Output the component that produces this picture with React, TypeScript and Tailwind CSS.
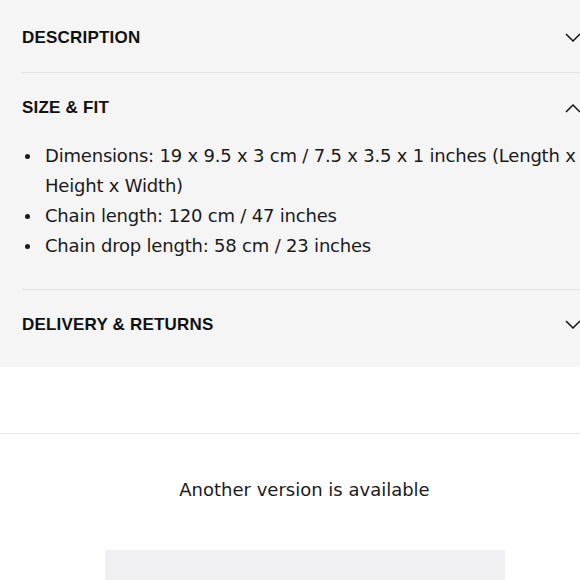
import React from "react";

const Chevron = ({ up = false }: { up?: boolean }) => (
  <svg
    width="16"
    height="10"
    viewBox="0 0 16 10"
    fill="none"
    stroke="#111"
    strokeWidth="1.5"
    className="-mr-px shrink-0"
  >
    {up ? <polyline points="1,9 8,2 15,9" /> : <polyline points="1,1 8,8 15,1" />}
  </svg>
);

const items = [
  "Dimensions: 19 x 9.5 x 3 cm / 7.5 x 3.5 x 1 inches (Length x Height x Width)",
  "Chain length: 120 cm / 47 inches",
  "Chain drop length: 58 cm / 23 inches",
];

const heading = "text-[17px] font-bold tracking-[0.2px] text-[#111]";
const headFont = { fontFamily: '"Liberation Sans", Arial, sans-serif' };

export default function App() {
  return (
    <div
      className="h-[580px] w-[580px] overflow-hidden bg-white text-[#1a1a1a]"
      style={{ fontFamily: '"DejaVu Sans", sans-serif' }}
    >
      <section className="bg-[#f5f5f5] pl-[22px] pb-[10px]">
        <div className="flex h-[73px] items-center justify-between border-b border-[#e2e2e2] pt-[4px]">
          <span className={heading} style={headFont}>DESCRIPTION</span>
          <Chevron />
        </div>

        <div className="border-b border-[#e2e2e2] pb-[28px]">
          <div className="flex h-[67px] items-center justify-between pt-[2px]">
            <span className={heading} style={headFont}>SIZE &amp; FIT</span>
            <Chevron up />
          </div>
          <ul className="pt-[1px] text-[18px] leading-[30px] tracking-[-0.2px]">
            {items.map((t) => (
              <li key={t} className="flex">
                <span className="flex h-[30px] w-[23px] shrink-0 items-center">
                  <span className="ml-[3px] h-[5px] w-[5px] rounded-full bg-[#1a1a1a]" />
                </span>
                <span>{t}</span>
              </li>
            ))}
          </ul>
        </div>

        <div className="flex h-[67px] items-center justify-between pt-[3px]">
          <span className={heading} style={headFont}>DELIVERY &amp; RETURNS</span>
          <Chevron />
        </div>
      </section>

      <div className="h-[66px]" />
      <div className="border-t border-[#e5e5e5] pl-[29px] pt-[42px]">
        <p className="text-center text-[18px] leading-[28px]">Another version is available</p>
        <div className="mx-auto mt-[46px] h-[40px] w-[400px] bg-[#f0f0f2]" />
      </div>
    </div>
  );
}
